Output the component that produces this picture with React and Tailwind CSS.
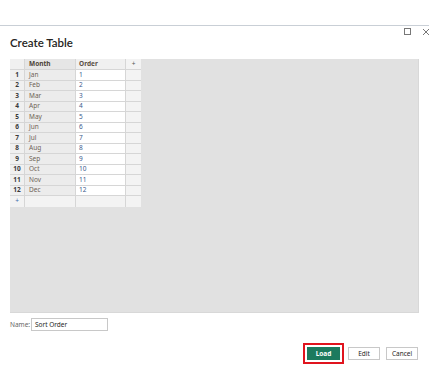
import React from 'react';

const MONTHS = ['Jan', 'Feb', 'Mar', 'Apr', 'May', 'Jun', 'Jul', 'Aug', 'Sep', 'Oct', 'Nov', 'Dec'];

export default function App() {
  return (
    <div className="w-[429px] h-[391px] bg-white overflow-hidden" style={{ fontFamily: '"Noto Sans", "Open Sans", sans-serif' }}>
      <div className="h-[25px]" />
      <div className="relative border-t border-[#c9cfd6]">
        {/* window buttons */}
        <div className="absolute right-0 top-[1px] flex items-center gap-[10px] text-[#777]">
          <svg width="8" height="8" viewBox="0 0 8 8" className="mt-[1px]">
            <rect x="0.5" y="0.5" width="6" height="6" fill="none" stroke="#777" strokeWidth="1" />
          </svg>
          <svg width="7" height="8" viewBox="0 0 7 8">
            <path d="M1 1 L7 7 M7 1 L1 7" stroke="#777" strokeWidth="1" />
          </svg>
        </div>

        <div className="pl-[10px] pt-[8px] h-[33px] text-[11.5px] font-semibold text-[#252423]" style={{ fontFamily: 'Lato, "Noto Sans", sans-serif' }}>Create Table</div>

        {/* grid area */}
        <div className="mx-[10px] h-[254px] bg-[#e1e1e1] border-b border-r border-[#d8d8d8]">
          <div className="grid grid-cols-[15px_51px_50px_15px] w-[131px] text-[6.5px] leading-none">
            <div className="h-[11px] bg-[#f0f0f0] border-r border-b border-[#d6d6d6]" />
            <div className="h-[11px] bg-[#e6e6e6] border-r border-b border-[#d6d6d6] flex items-center pl-[4px] font-bold text-[#4a3f35]">Month</div>
            <div className="h-[11px] bg-[#f0f0f0] border-r border-b border-[#d6d6d6] flex items-center pl-[3px] font-bold text-[#5a4f45]">Order</div>
            <div className="h-[11px] bg-[#f3f3f3] border-b border-[#d6d6d6] flex items-center justify-center text-[#555]">+</div>
            {MONTHS.map((m, i) => (
              <React.Fragment key={m}>
                <div className="h-[10.5px] bg-[#f0f0f0] border-r border-b border-[#d6d6d6] flex items-center justify-center font-bold text-[#3a3a3a]">{i + 1}</div>
                <div className="h-[10.5px] bg-[#ececec] border-r border-b border-[#d6d6d6] flex items-center pl-[4px] text-[#6f6356]">{m}</div>
                <div className="h-[10.5px] bg-white border-r border-b border-[#d6d6d6] flex items-center pl-[3px] text-[#3b5a8c]">{i + 1}</div>
                <div className="h-[10.5px] bg-[#f3f3f3] border-b border-[#d6d6d6]" />
              </React.Fragment>
            ))}
            <div className="h-[10.5px] bg-[#f3f3f3] border-r border-[#d6d6d6] flex items-center justify-center text-[#3b6fb0]">+</div>
            <div className="h-[10.5px] bg-[#f3f3f3] border-r border-[#d6d6d6]" />
            <div className="h-[10.5px] bg-[#f3f3f3] border-r border-[#d6d6d6]" />
            <div className="h-[10.5px] bg-[#f3f3f3]" />
          </div>
        </div>

        {/* name */}
        <div className="flex items-center pl-[10px] mt-[5px] h-[13px]">
          <span className="text-[6.5px] text-[#666] w-[21px]">Name:</span>
          <div className="w-[77px] h-[13px] border border-[#c8c8c8] flex items-center pl-[3px] text-[6.5px] text-[#252423]">Sort Order</div>
        </div>

        {/* buttons */}
        <div className="flex justify-end items-center pr-[11px] mt-[12px]">
          <div className="border-2 border-[#e0141e] p-[2px]">
            <div className="w-[33px] h-[13px] bg-[#1c7a5e] flex items-center justify-center text-white text-[6.5px] font-bold">Load</div>
          </div>
          <div className="ml-[4px] w-[32px] h-[13px] border border-[#c8c8c8] bg-white flex items-center justify-center text-[#252423] text-[6.5px]">Edit</div>
          <div className="ml-[6px] w-[32px] h-[13px] border border-[#c8c8c8] bg-white flex items-center justify-center text-[#252423] text-[6.5px]">Cancel</div>
        </div>
      </div>
    </div>
  );
}
